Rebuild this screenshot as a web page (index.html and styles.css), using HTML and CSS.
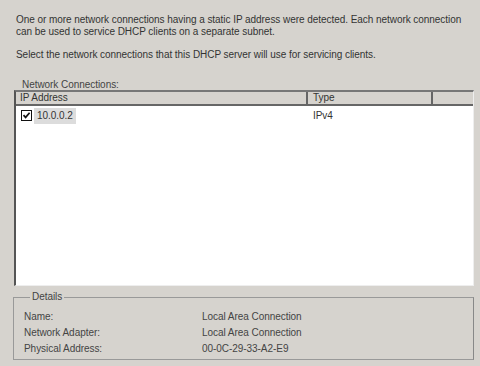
FILE: index.html
```html
<!DOCTYPE html>
<html lang="en">
<head>
    <meta charset="UTF-8">
    <title>DHCP Network Connection Bindings</title>
    <link rel="stylesheet" href="styles.css">
</head>
<body>
    <div class="page">
        <p class="intro">One or more network connections having a static IP address were detected. Each network connection can be used to service DHCP clients on a separate subnet.</p>
        <p class="intro select">Select the network connections that this DHCP server will use for servicing clients.</p>

        <div class="list-label">Network Connections:</div>
        <div class="list-box">
            <div class="list-header">
                <div class="col col-ip">IP Address</div>
                <div class="col col-type">Type</div>
                <div class="col col-rest"></div>
            </div>
            <div class="list-row">
                <div class="col col-ip">
                    <span class="check">
                        <svg width="9" height="9" viewBox="0 0 9 9"><path d="M1.5 4.2 L3.6 6.4 L7.6 1.8" fill="none" stroke="#111" stroke-width="1.7"/></svg>
                    </span>
                    <span class="ip-text">10.0.0.2</span>
                </div>
                <div class="col col-type">IPv4</div>
            </div>
        </div>

        <fieldset class="details">
            <legend>Details</legend>
            <div class="detail-row"><span class="key">Name:</span><span>Local Area Connection</span></div>
            <div class="detail-row"><span class="key">Network Adapter:</span><span>Local Area Connection</span></div>
            <div class="detail-row"><span class="key">Physical Address:</span><span>00-0C-29-33-A2-E9</span></div>
        </fieldset>
    </div>
</body>
</html>
```

FILE: styles.css
```css
body {
    margin: 0;
    background-color: #d6d3ce;
    font-family: 'Liberation Sans', Arial, sans-serif;
    font-size: 10px;
    letter-spacing: -0.05px;
    color: #333;
}
.page {
    padding: 14px 6px 0 14px;
    width: 460px;
}
.intro {
    margin: 0 0 0 2px;
    line-height: 12px;
}
.select {
    margin-top: 11px;
}
.list-label {
    margin: 18px 0 0 8px;
    line-height: 12px;
    color: #444;
}
.list-box {
    height: 193px;
    margin-top: -1px;
    background: #fff;
    border-top: 2px solid #777;
    border-left: 2px solid #555;
    border-right: 1px solid #eee;
    border-bottom: 1px solid #eee;
}
.list-header {
    display: flex;
    height: 12px;
    background: #d6d3ce;
    border-bottom: 2px solid #666;
    line-height: 12px;
}
.list-header .col {
    border-right: 2px solid #666;
}
.list-header .col-rest {
    border-right: none;
    flex: 1;
}
.col-ip {
    width: 286px;
    padding-left: 4px;
}
.col-type {
    width: 118px;
    padding-left: 5px;
}
.list-row {
    display: flex;
    align-items: center;
    height: 17px;
    margin-top: 1px;
}
.list-row .col-ip {
    display: flex;
    align-items: center;
    width: 288px;
    padding-left: 5px;
}
.list-row .col-type {
    padding-left: 4px;
}
.check {
    display: inline-flex;
    align-items: center;
    justify-content: center;
    width: 9px;
    height: 9px;
    border: 1px solid #111;
    background: #fff;
}
.ip-text {
    background: #dcdcdc;
    padding: 2px 3px;
    margin-left: 2px;
    line-height: 12px;
}
.details {
    margin: 5px 0 0 -1px;
    padding: 6px 0 2px 10px;
    border: 1px solid #999;
    border-right-color: #888;
}
.details legend {
    padding: 0 2px;
    margin-left: 6px;
    line-height: 12px;
    color: #444;
}
.detail-row {
    display: flex;
    line-height: 16px;
    color: #444;
}
.key {
    width: 178px;
}
```
